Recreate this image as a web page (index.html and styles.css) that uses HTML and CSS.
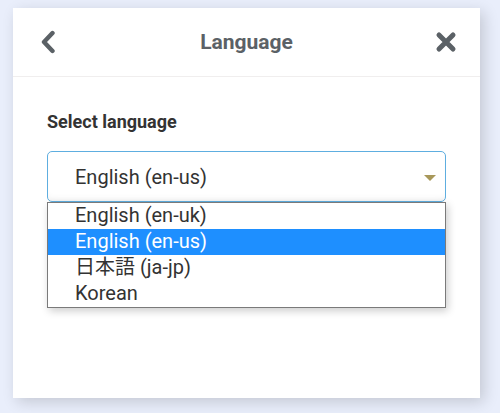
FILE: index.html
```html
<html>
	<head>
		<title>Language</title>
		<link rel="stylesheet" href="styles.css">
	</head>
	<body>
		<div class="panel">
			<div class="panel-head">
				<a class="head-btn" href="#">
					<svg width="16" height="24" viewBox="0 0 16 24"><path d="M12.5 3 L4 12 L12.5 21" fill="none" stroke="#5b6166" stroke-width="4.4" stroke-linecap="round" stroke-linejoin="round"/></svg>
				</a>
				<div class="panel-title">Language</div>
				<a class="head-btn" href="#">
					<svg width="22" height="22" viewBox="0 0 22 22"><path d="M4 4 L18 18 M18 4 L4 18" fill="none" stroke="#5b6166" stroke-width="5" stroke-linecap="round"/></svg>
				</a>
			</div>
			<div class="panel-body">
				<div class="field-label">Select language</div>
				<div class="select">
					<span>English (en-us)</span>
					<span class="caret"></span>
				</div>
				<ul class="options">
					<li>English (en-uk)</li>
					<li class="active">English (en-us)</li>
					<li>日本語 (ja-jp)</li>
					<li>Korean</li>
				</ul>
			</div>
		</div>
	</body>
</html>
```

FILE: styles.css
```css
body
{
	margin:0;
	background:#e9eefb;
	font-family:Roboto, "Noto Sans CJK JP", sans-serif;
	padding:8px 20px 15px 13px;
}
.panel
{
	background:white;
	height:390px;
	box-shadow:4px 4px 14px rgba(0,0,0,0.16);
}
.panel-head
{
	height:68px;
	border-bottom:1px solid #f0eeee;
	display:flex;
	align-items:center;
	justify-content:space-between;
	padding:0 23px 0 27px;
}
.head-btn
{
	display:flex;
	align-items:center;
}
.panel-title
{
	font-size:21px;
	font-weight:bold;
	color:#5b6166;
	margin-left:2px;
}
.panel-body
{
	padding:34px 34px 0 34px;
}
.field-label
{
	font-size:18px;
	line-height:21px;
	font-weight:bold;
	color:#333;
	margin-bottom:19px;
}
.select
{
	height:49px;
	border:1px solid #5eaee0;
	border-radius:5px;
	display:flex;
	align-items:center;
	justify-content:space-between;
	padding:0 9px 0 27px;
	font-size:20px;
	color:#333;
	box-shadow:inset 0 -6px 8px -6px rgba(0,0,0,0.08);
}
.caret
{
	width:0;
	height:0;
	border-left:6px solid transparent;
	border-right:6px solid transparent;
	border-top:6px solid #a8985a;
	margin-top:2px;
}
.options
{
	list-style:none;
	margin:0;
	padding:0;
	border:1px solid #7a7a7a;
	box-shadow:2px 3px 8px rgba(0,0,0,0.2);
	font-size:20px;
	color:#333;
}
.options li
{
	height:26px;
	line-height:25px;
	padding-left:27px;
}
.options li.active
{
	background:#1e8fff;
	color:white;
}
```
